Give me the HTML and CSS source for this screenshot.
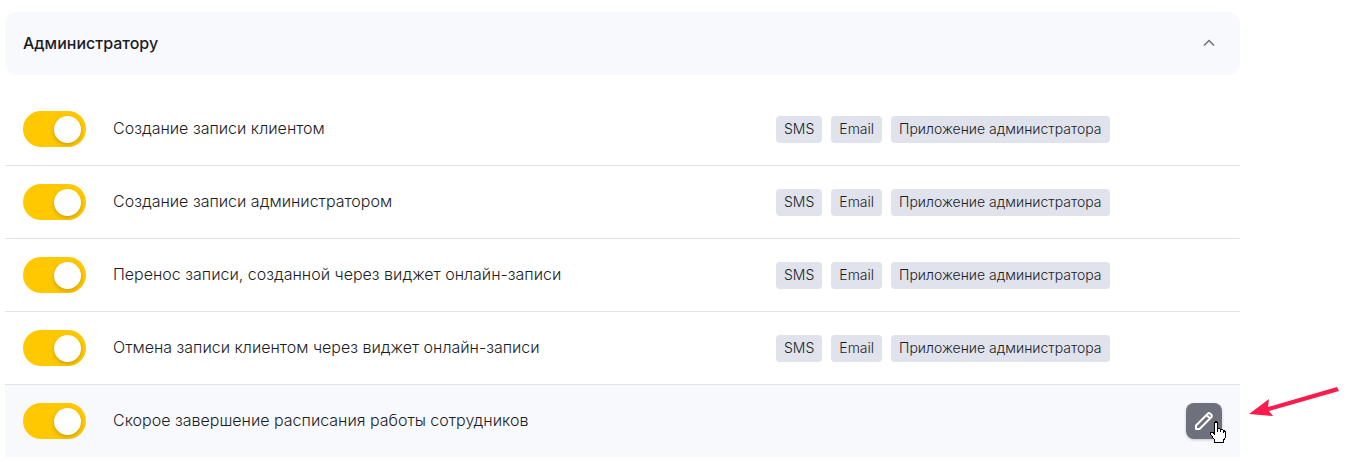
FILE: index.html
```html
<!doctype html>
<html lang="ru">
    <head>
        <title>Уведомления</title>
        <meta charset="UTF-8"/>
        <meta name="viewport" content="width=device-width, initial-scale=1"/>
        <link rel="stylesheet" href="styles.css">
    </head>
    <body>
        <main class="notifications">
            <h2 class="group-title">
                <button class="group-header" type="button" aria-expanded="true">
                    Администратору
                    <svg class="chevron" width="12" height="8" viewBox="0 0 12 8" aria-hidden="true">
                        <path d="M1 6.500 6 1.500l5 5"/>
                    </svg>
                </button>
            </h2>
            <ul class="rows">
                <li class="row">
                    <input class="switch" type="checkbox" id="client-create" checked/>
                    <label class="name" for="client-create">Создание записи клиентом</label>
                    <div class="channels"><span class="tag">SMS</span><span class="tag">Email</span><span class="tag">Приложение администратора</span></div>
                </li>
                <li class="row">
                    <input class="switch" type="checkbox" id="admin-create" checked/>
                    <label class="name" for="admin-create">Создание записи администратором</label>
                    <div class="channels"><span class="tag">SMS</span><span class="tag">Email</span><span class="tag">Приложение администратора</span></div>
                </li>
                <li class="row">
                    <input class="switch" type="checkbox" id="widget-move" checked/>
                    <label class="name" for="widget-move">Перенос записи, созданной через виджет онлайн-записи</label>
                    <div class="channels"><span class="tag">SMS</span><span class="tag">Email</span><span class="tag">Приложение администратора</span></div>
                </li>
                <li class="row">
                    <input class="switch" type="checkbox" id="widget-cancel" checked/>
                    <label class="name" for="widget-cancel">Отмена записи клиентом через виджет онлайн-записи</label>
                    <div class="channels"><span class="tag">SMS</span><span class="tag">Email</span><span class="tag">Приложение администратора</span></div>
                </li>
                <li class="row active">
                    <input class="switch" type="checkbox" id="schedule-end" checked/>
                    <label class="name" for="schedule-end">Скорое завершение расписания работы сотрудников</label>
                    <button class="edit-button" type="button" aria-label="Редактировать">
                        <svg class="pencil" width="20" height="20" viewBox="0 0 20 20" aria-hidden="true">
                            <path d="M2 18V14.500L14 2.500a1.500 1.500 0 0 1 2 0l1.500 1.500a1.500 1.500 0 0 1 0 2L5.500 18zM12.500 4 16 7.500"/>
                        </svg>
                    </button>
                    <svg class="cursor" width="17" height="22" viewBox="0 0 17 22" shape-rendering="crispEdges" aria-hidden="true">
                        <path d="M5.500 13.500V2.500l1-2h1l1 2v5h2l1 1h2l1 1h1l1 2v5l-2 2.500v2.500h-9v-2.500l-4-6v-2h2z"/>
                        <path d="M8.500 7v4M11.500 8v3M14.500 9v3"/>
                    </svg>
                    <svg class="arrow" width="92" height="32" viewBox="0 0 92 32" aria-hidden="true">
                        <path d="M89 1 91 5 21 25 25 30 1 28 21 13 20 21z"/>
                    </svg>
                </li>
            </ul>
        </main>
    </body>
</html>
```
FILE: styles.css
```css
body {
    margin: 0;
    font-family: Inter, "Liberation Sans", sans-serif;
    font-size: 16px;
    line-height: 24px;
    color: #1b1d26;
    background-color: #ffffff;
}
.notifications {
    margin: 12px 115px 0 5px;
}
.group-title {
    margin: 0 0 18px;
    font-size: 16px;
}
.group-header {
    display: flex;
    align-items: center;
    justify-content: space-between;
    width: 100%;
    min-height: 63px;
    padding: 0 25px 2px 18px;
    font: inherit;
    font-weight: 500;
    color: inherit;
    background-color: #f8f9fd;
    border: 0;
    border-radius: 12px;
    cursor: pointer;
}
.chevron {
    fill: none;
    stroke: #6c6f7b;
    stroke-width: 1.5;
}
.rows {
    margin: 0;
    padding: 0;
    list-style: none;
    font-weight: 300;
}
.row {
    display: grid;
    grid-template-columns: 63px 1fr 446px;
    align-items: center;
    column-gap: 27px;
    position: relative;
    min-height: 72px;
    padding: 0 18px;
    border-bottom: 1px solid #e1e3ec;
}
.row.active {
    background-color: #f8f9fd;
    border-bottom: 0;
}
.switch {
    appearance: none;
    width: 63px;
    height: 36px;
    margin: 0;
    padding: 5px;
    box-sizing: border-box;
    background-color: #ffc800;
    border-radius: 18px;
    cursor: pointer;
}
.switch::before {
    content: "";
    display: block;
    width: 27px;
    height: 27px;
    background-color: #ffffff;
    border-radius: 50%;
    box-shadow: 0 2px 4px rgba(0, 0, 0, 0.2);
}
.switch:checked::before {
    margin-left: auto;
}
.name {
    padding-bottom: 2px;
}
.channels {
    display: flex;
    gap: 9px;
}
.tag {
    padding: 3px 8px 5px;
    font-size: 14px;
    line-height: 19px;
    white-space: nowrap;
    background-color: #e0e2ec;
    border-radius: 4px;
}
.edit-button {
    display: flex;
    align-items: center;
    justify-content: center;
    justify-self: end;
    width: 36px;
    height: 36px;
    padding: 0;
    background-color: #6e717c;
    border: 0;
    border-radius: 8px;
    box-shadow: 0 1px 3px rgba(0, 0, 0, 0.2);
    cursor: pointer;
}
.pencil {
    fill: none;
    stroke: #ffffff;
    stroke-width: 2;
    stroke-linejoin: round;
}
.cursor {
    position: absolute;
    right: 14px;
    top: 36px;
    fill: #ffffff;
    stroke: #000000;
}
.arrow {
    position: absolute;
    left: 100%;
    top: 1px;
    margin-left: 8px;
    fill: #fa1c4c;
}
```
